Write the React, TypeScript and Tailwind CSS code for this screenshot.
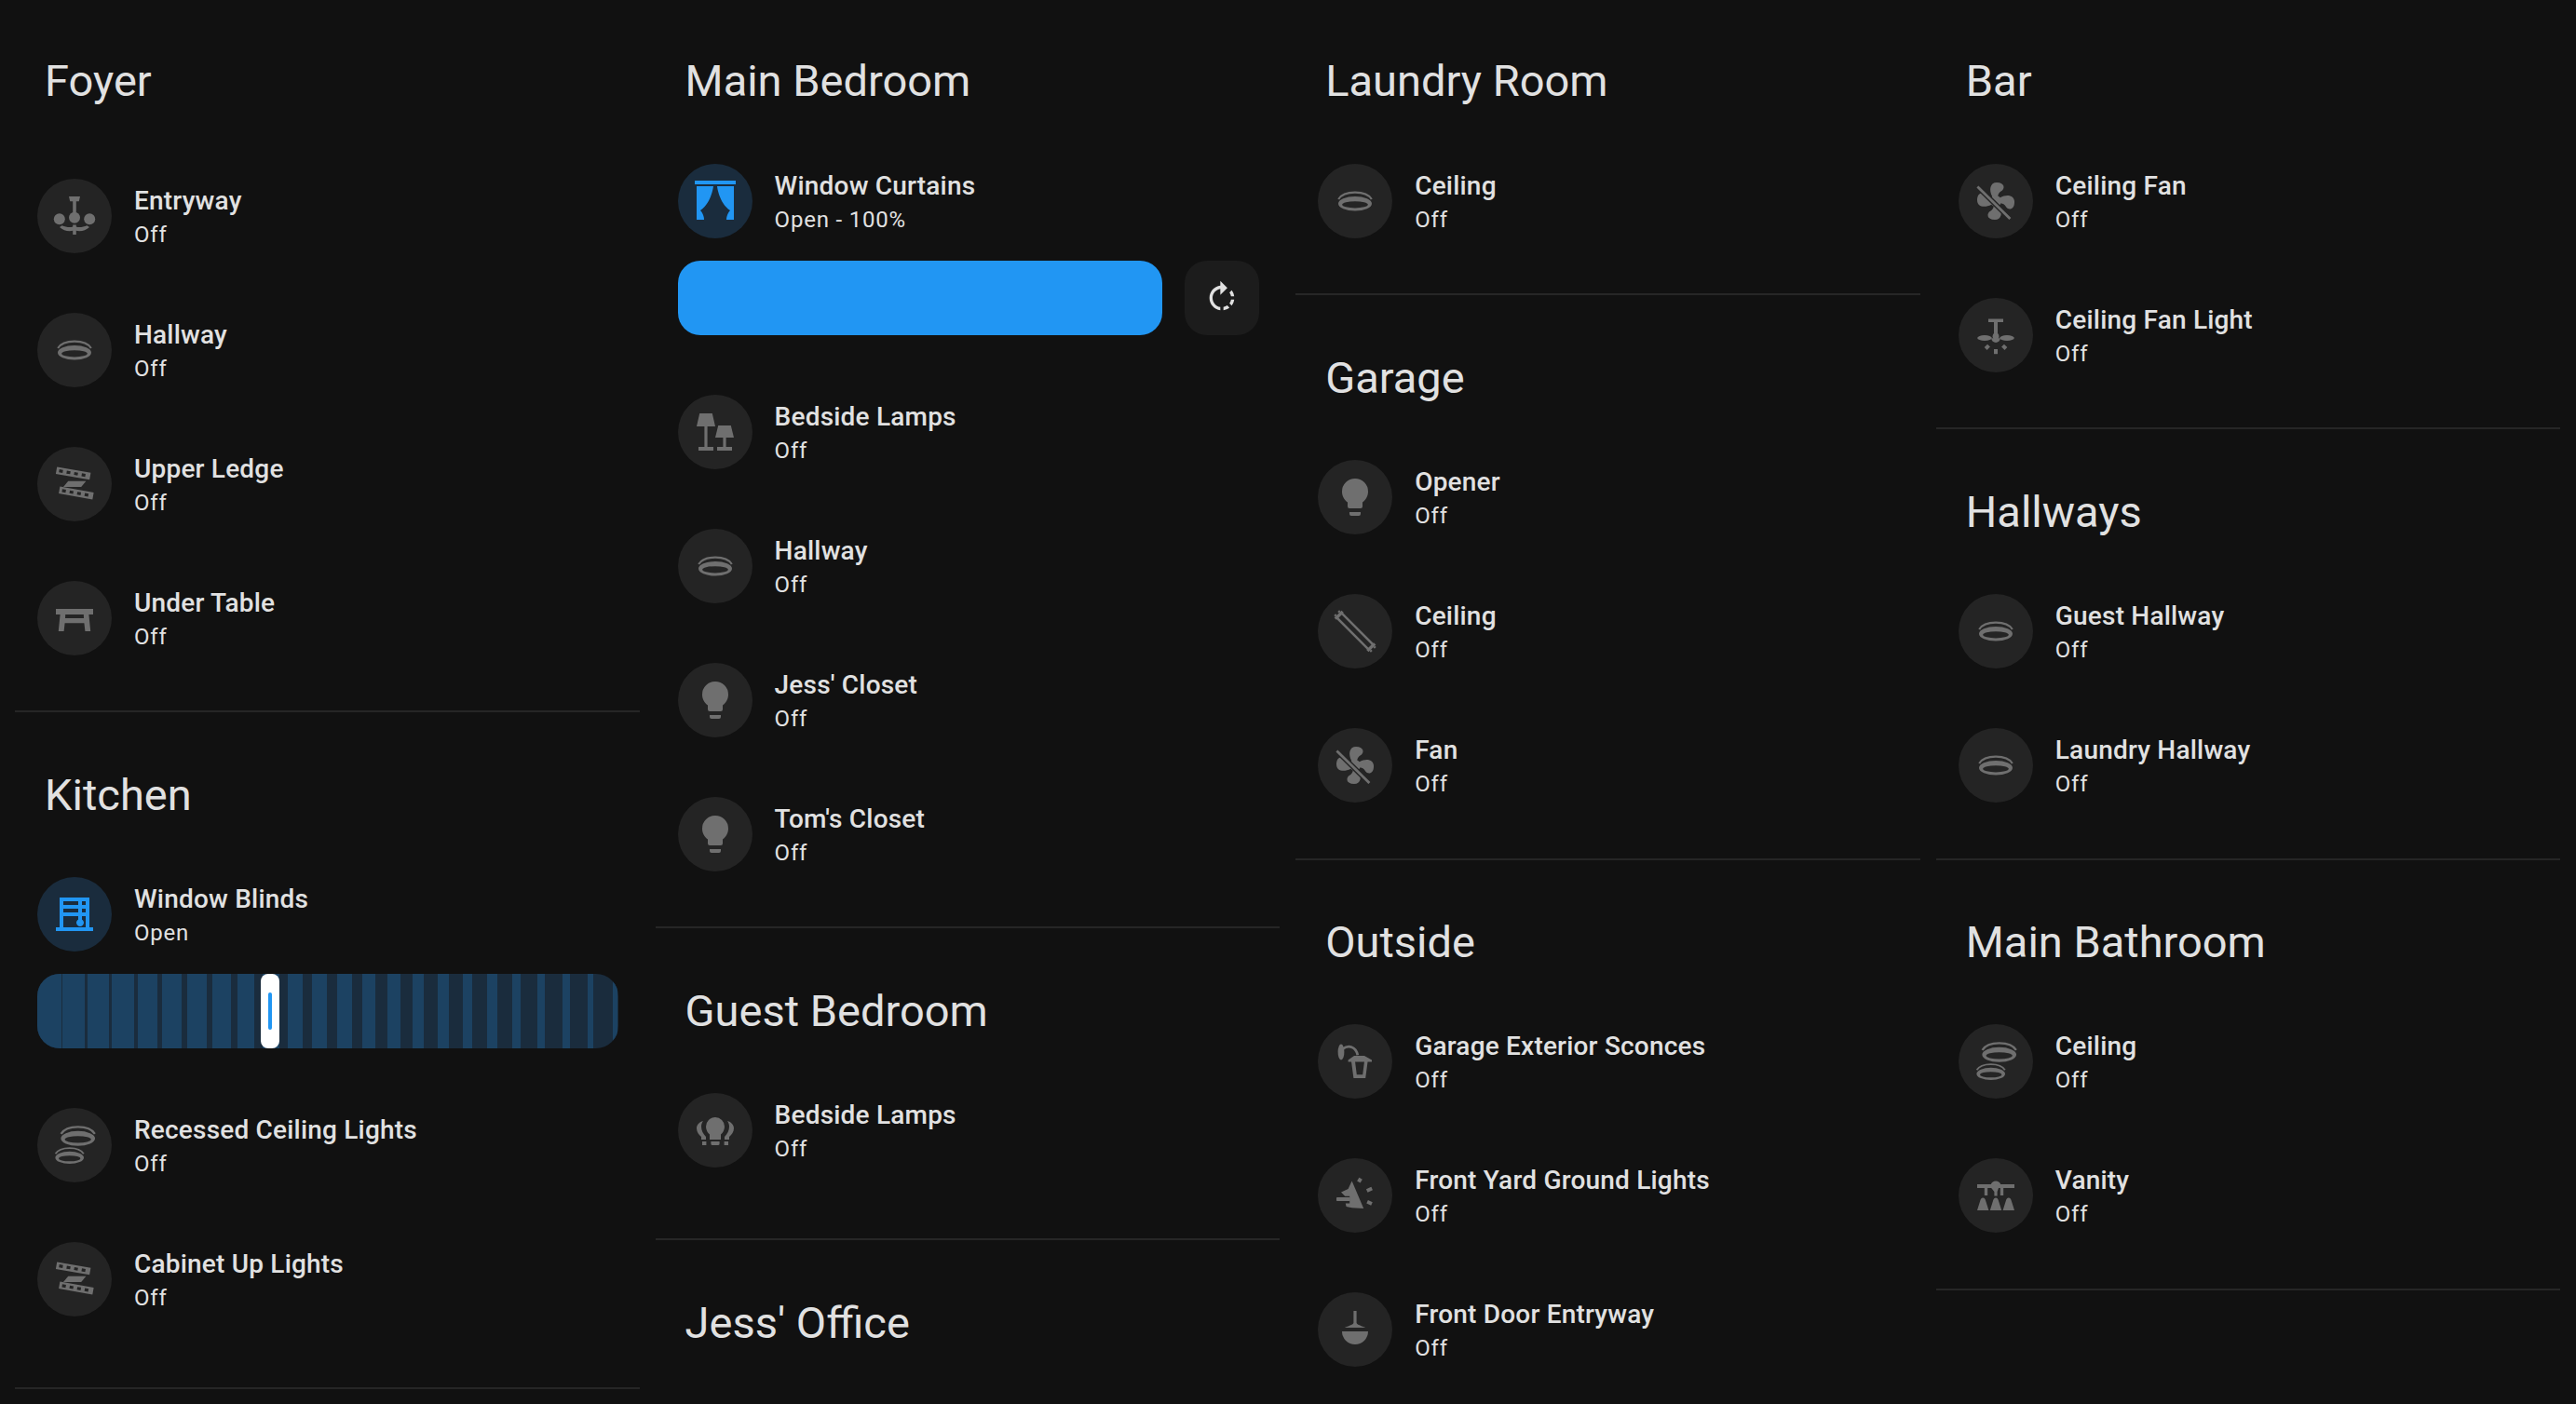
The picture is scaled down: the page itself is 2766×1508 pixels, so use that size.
const FAN = "M12.5,2C17,2 17.11,5.57 14.75,6.75C13.76,7.24 13.32,8.29 13.13,9.22C13.61,9.42 14.03,9.73 14.35,10.13C18.05,8.13 22.03,8.92 22.03,12.5C22.03,17 18.46,17.1 17.28,14.73C16.78,13.74 15.72,13.3 14.79,13.11C14.59,13.59 14.28,14 13.88,14.34C15.87,18.03 15.08,22 11.5,22C7,22 6.91,18.42 9.27,17.24C10.25,16.75 10.69,15.71 10.89,14.79C10.4,14.59 9.97,14.27 9.65,13.87C5.96,15.85 2,15.07 2,11.5C2,7 5.56,6.89 6.74,9.26C7.24,10.25 8.29,10.68 9.22,10.87C9.41,10.39 9.73,9.97 10.14,9.65C8.15,5.96 8.94,2 12.5,2Z";
const BULB = "M12,2A7,7 0 0,0 5,9C5,11.38 6.19,13.47 8,14.74V17A1,1 0 0,0 9,18H15A1,1 0 0,0 16,17V14.74C17.81,13.47 19,11.38 19,9A7,7 0 0,0 12,2M9,21A1,1 0 0,0 10,22H14A1,1 0 0,0 15,21V20H9V21Z";

const Svg = ({ size = 48, children }: { size?: number; children: React.ReactNode }) => (
  <svg width={size} height={size} viewBox="0 0 24 24" fill="currentColor">
    {children}
  </svg>
);

// recessed light: a thick ring with a thin arc above it
const Ring = ({ cx, cy, s = 1 }: { cx: number; cy: number; s?: number }) => (
  <g transform={`translate(${cx} ${cy}) scale(${s})`}>
    <path fillRule="evenodd" d="M-9 0a9 3.9 0 0 1 18 0a9 3.9 0 0 1-18 0zM-6.9 .5a6.9 1.8 0 0 0 13.8 0a6.9 1.8 0 0 0-13.8 0z" />
    <path d="M-8.9 -2.4C-6 -7.3 6 -7.3 8.9 -2.4" fill="none" stroke="currentColor" strokeWidth={1.1} />
  </g>
);

const Recessed = () => <Svg><Ring cx={12} cy={13.4} /></Svg>;
const RecessedDouble = () => (
  <Svg>
    <Ring cx={13.85} cy={8.4} s={1.02} />
    <Ring cx={9.35} cy={18.7} s={0.85} />
  </Svg>
);

const Chandelier = () => (
  <Svg>
    <path d="M9 1.5h6l-.6 2.6h-1.5V10h-1.8V4.1H9.6z" />
    <circle cx={3.9} cy={13.6} r={3} />
    <circle cx={12} cy={12.9} r={3} />
    <circle cx={20.1} cy={13.6} r={3} />
    <path d="M11.1 16.8h1.8v.9c1.6.8 4 0 5.8-.6l1.300.9c-1.900 1.800-4.800 2.500-7.100 1.900V22h-1.800v-2.100c-2.300.6-5.200-.1-7.100-1.900l1.300-.9c1.800.6 4.200 1.400 5.800.6z" />
  </Svg>
);

const StripBand = ({ x, y, angle }: { x: number; y: number; angle: number }) => (
  <g transform={`rotate(${angle} ${x} ${y})`}>
    <path fillRule="evenodd" d={`M${x} ${y}h18.4v3.8H${x}zM${x + 1.5} ${y + 1.1}v1.6h2v-1.6zM${x + 5.6} ${y + 1.1}v1.6h2v-1.6zM${x + 9.7} ${y + 1.1}v1.6h2v-1.6zM${x + 13.8} ${y + 1.1}v1.6h2v-1.6z`} />
  </g>
);

const LedStrip = () => (
  <Svg>
    <StripBand x={2.6} y={2.7} angle={10} />
    <path d="M8.6 10.4h9.6l-2.6 3.1H6z" />
    <StripBand x={4.2} y={13.3} angle={10} />
  </Svg>
);

const Table = () => (
  <Svg><path d="M2 7h20v3h-2.3l.9 9h-2.9l-.5-4.4H6.8L6.3 19H3.4l.9-9H2zM7.1 10l-.1 2h10l-.1-2z" fillRule="evenodd" /></Svg>
);

const Bulb = () => <Svg><path d={BULB} /></Svg>;

const FanOff = () => (
  <Svg>
    <path d={FAN} />
    <path d="M2.2 4.3L19.7 21.5" stroke="#242424" strokeWidth={2.8} fill="none" />
    <path d="M2.2 4.3L19.7 21.5" stroke="currentColor" strokeWidth={1.4} fill="none" />
  </Svg>
);

const Lamps = () => (
  <Svg>
    <path d="M3.6 2h6.8L12 9H2zM6.2 9h1.6v11H11v2H3v-2h3.2zM13.6 8.5h6.8l1.6 6.5H12zM16.2 15h1.6v5H21v2h-8v-2h3.2z" />
  </Svg>
);

const Tube = () => (
  <Svg>
    <g transform="rotate(45 12 12)">
      <rect x={0} y={10.2} width={24} height={3.6} fill="none" stroke="currentColor" strokeWidth={1.3} />
      <rect x={-1} y={9.2} width={1.6} height={5.6} />
      <rect x={23.4} y={9.2} width={1.6} height={5.6} />
      <rect x={-2} y={10} width={1} height={1.2} />
      <rect x={-2} y={12.8} width={1} height={1.2} />
      <rect x={25} y={10} width={1} height={1.2} />
      <rect x={25} y={12.8} width={1} height={1.2} />
    </g>
  </Svg>
);

const Sconce = () => (
  <Svg>
    <ellipse cx={4.5} cy={7} rx={1.7} ry={4.2} />
    <path d="M5.5 5.2C8.5 3 12.4 4 13.4 8.6" fill="none" stroke="currentColor" strokeWidth={1.4} />
    <path d="M11.5 9h5.5l4 2.2v1H8.3v-1z" />
    <path d="M10 12h2l.9 7.1h3.2l.9-7.1h1.8l-1.2 9h-6.4z" />
  </Svg>
);

const GroundLight = () => (
  <Svg>
    <path d="M10.3 4.2L16.6 19l-6.3-.4-3-.6-.4-1.7h2.2V12.4H6.6L4.5 10.3l3.8-1.8z" />
    <rect x={2} y={13} width={7.4} height={2} rx={0.4} />
    <rect x={13.4} y={2.8} width={2.2} height={2} transform="rotate(-60 14.5 3.8)" />
    <rect x={18.2} y={7.9} width={3} height={1.9} transform="rotate(-25 19.7 8.8)" />
    <rect x={18.4} y={15} width={2.7} height={1.9} transform="rotate(25 19.7 16)" />
  </Svg>
);

const Pendant = () => (
  <Svg>
    <path d="M11.2 2h1.6v6.5c.4 1 3 1.7 4.5 2.3v.2H6.7v-.2c1.5-.6 4.1-1.3 4.5-2.3z" />
    <path d="M5 13h14a7 7 0 0 1-14 0z" />
  </Svg>
);

const FanLight = () => (
  <Svg>
    <path d="M8 3.2h8V5h-3v7h-2V5H8z" />
    <ellipse cx={6} cy={13.5} rx={3.9} ry={1.5} />
    <ellipse cx={18} cy={13.5} rx={3.9} ry={1.5} />
    <path d="M9.6 13.6h4.8a2.4 2.4 0 0 1-4.8 0z" />
    <circle cx={12} cy={12.6} r={1.7} />
    <rect x={11} y={19.5} width={2} height={2.6} />
    <rect x={6.4} y={17.2} width={2} height={2.4} transform="rotate(45 7.4 18.4)" />
    <rect x={15.6} y={17.2} width={2} height={2.4} transform="rotate(-45 16.6 18.4)" />
  </Svg>
);

const Vanity = () => (
  <Svg>
    <path d="M2 6h7.4a2.8 2.8 0 0 1 5.2 0H22v2h-5.9v4h-1.7V8h-.9L12.8 10v2.2h-1.6V10L9.6 8H7.6v4H5.900V8H2z" />
    <path d="M5.1 13.2c.8 0 1.3.6 1.6 2L8.2 20H2l1.5-4.8c.3-1.4.8-2 1.6-2z" />
    <path d="M12 13.2c.8 0 1.3.6 1.6 2l1.5 4.8H8.9l1.5-4.8c.3-1.4.8-2 1.6-2z" />
    <path d="M18.9 13.2c.8 0 1.3.6 1.6 2L22 20h-6.2l1.5-4.8c.3-1.4.8-2 1.6-2z" />
  </Svg>
);

const BulbGroup = () => (
  <Svg>
    <path d="M12 5a5 5 0 0 0-5 5c0 1.8.9 3.3 2 4.3V17h6v-2.700c1.100-1 2-2.500 2-4.300a5 5 0 0 0-5-5z" />
    <path d="M9.7 18h4.6v1.2a.8.8 0 0 1-.8.8h-3a.8.8 0 0 1-.8-.8z" />
    <path d="M5.5 7C3.5 7.5 2 9 2 11c0 2 1.3 3.5 2.5 4.5V17h2.5v-1.5C5.5 14 4.500 12 4.500 10c0-1.200.4-2.200 1-3z" />
    <path d="M18.5 7c2 .5 3.500 2 3.500 4 0 2-1.300 3.500-2.500 4.500V17H17v-1.500c1.500-1.500 2.500-3.500 2.500-5.500 0-1.200-.4-2.200-1-3z" />
    <rect x={5} y={18} width={2.2} height={2} />
    <rect x={16.8} y={18} width={2.2} height={2} />
  </Svg>
);

const Curtains = () => (
  <Svg><path d="M23 3H1V1H23V3M2 22H6C6 19 4 17 4 17C10 13 11 4 11 4H2V22M22 4V22H18C18 19 20 17 20 17C14 13 13 4 13 4H22Z" /></Svg>
);

const BlindsOpen = () => (
  <Svg><path d="M20 19V3H4V19H2V21H22V19H20M16 9H18V11H16V9M14 11H6V9H14V11M18 7H16V5H18V7M14 5V7H6V5H14M6 19V13H14V14.82C13.4 15.16 13 15.79 13 16.5C13 17.61 13.9 18.5 15 18.5S17 17.61 17 16.5C17 15.79 16.6 15.16 16 14.82V13H18V19H6Z" /></Svg>
);

const RotateRight = () => (
  <Svg size={40}><path d="M16.89,15.5L18.31,16.89C19.21,15.73 19.76,14.39 19.93,13H17.91C17.77,13.87 17.43,14.72 16.89,15.5M13,17.9V19.92C14.39,19.75 15.74,19.21 16.9,18.31L15.46,16.87C14.71,17.41 13.87,17.76 13,17.9M19.93,11C19.76,9.61 19.21,8.27 18.31,7.11L16.89,8.53C17.43,9.28 17.77,10.13 17.91,11M15.55,5.55L11,1V4.07C7.06,4.56 4,7.92 4,12C4,16.08 7.05,19.44 11,19.93V17.91C8.16,17.43 6,14.97 6,12C6,9.03 8.16,6.57 11,6.09V10L15.55,5.55Z" /></Svg>
);

// light slats of the blinds track: [left, width]
const SLATS: [number, number][] = [
  [0, 25.5], [27.3, 24.1], [54.5, 22.8], [80.4, 23.2], [107.6, 21.9], [134.4, 20.5], [161.2, 20.5], [188.4, 19.2],
  [215.2, 18.3], [242, 18.3], [269.2, 16.1], [295.6, 16], [322.4, 15.6], [349.6, 13.8], [376.4, 13.4], [403.1, 12.1],
  [430.4, 11.6], [457.6, 9.8], [483.5, 10.3], [510.3, 9], [537.6, 8], [564.3, 7.6], [591.6, 5.8], [618.4, 4.6],
];

const BlindsSlider = () => (
  <div className="relative h-20 overflow-hidden rounded-[24px] bg-[#1a2c3d]">
    <div className="flex h-full">
      {SLATS.map(([left, width], i) => (
        <div
          key={left}
          className="h-full shrink-0 bg-[#1c4262]"
          style={{ width, marginLeft: i === 0 ? 0 : left - SLATS[i - 1][0] - SLATS[i - 1][1] }}
        />
      ))}
    </div>
    <div className="absolute inset-y-0 left-[240px] flex w-5 items-center justify-center rounded-[8px] bg-white">
      <div className="h-10 w-1 rounded-full bg-[#2196f3]" />
    </div>
  </div>
);

const CurtainSlider = () => (
  <div className="flex gap-6">
    <div className="h-20 flex-1 rounded-[24px] bg-[#2196f3]" />
    <div className="flex h-20 w-20 items-center justify-center rounded-[24px] bg-[#1c1c1c] text-[#e1e1e1]">
      <RotateRight />
    </div>
  </div>
);

type Device = { name: string; state?: string; Icon: () => React.ReactNode; active?: boolean; control?: React.ReactNode };

const Row = ({ name, state = 'Off', Icon, active, control }: Device) => (
  <div className="py-8 pl-6 pr-[22.5px]">
    <div className="flex h-20 items-center gap-6">
      <div
        className={
          active
            ? 'flex h-20 w-20 shrink-0 items-center justify-center rounded-full bg-[#1a2c3d] text-[#2196f3]'
            : 'flex h-20 w-20 shrink-0 items-center justify-center rounded-full bg-[#242424] text-[#6f6f6f]'
        }
      >
        <Icon />
      </div>
      <div className="flex flex-col text-[#e1e1e1]">
        <span className="text-[28px] font-medium leading-[40px] tracking-[0.2px]">{name}</span>
        <span className="text-[24px] leading-[32px] tracking-[0.8px]">{state}</span>
      </div>
    </div>
    {control && <div className="mt-6">{control}</div>}
  </div>
);

type SectionProps = { title: string; first?: boolean; extraTop?: boolean; tall?: boolean; tight?: boolean; noDivider?: boolean; devices?: Device[] };

const Section = ({ title, first, extraTop, tall, tight, noDivider, devices = [] }: SectionProps) => {
  const edge = noDivider ? '' : tall ? 'border-b-2 border-[#262626] pb-[44px]' : first ? 'border-b-2 border-[#262626] pb-[27px]' : 'border-b-2 border-[#262626] pb-7';
  const headPad = first ? 'pt-[57px]' : tight ? 'pt-[58px]' : 'pt-[59px]';
  const listTop = extraTop ? 'mt-[42.5px]' : first ? 'mt-[26.5px]' : 'mt-[26px]';
  return (
    <section className={edge}>
      <h2 className={`box-content h-[60px] pl-8 text-[47px] leading-[60px] text-[#e1e1e1] ${headPad}`}>{title}</h2>
      <div className={listTop}>
        {devices.map((d) => (
          <Row key={d.name + title} {...d} />
        ))}
      </div>
    </section>
  );
};

export default function App() {
  return (
    <div className="grid h-[1508px] w-[2766px] grid-cols-[repeat(4,670.5px)] items-start gap-x-[17.1px] overflow-hidden bg-[#111111] pl-4 font-['Roboto',sans-serif]">
      <div>
        <Section
          first
          extraTop
          title="Foyer"
          devices={[
            { name: 'Entryway', Icon: Chandelier },
            { name: 'Hallway', Icon: Recessed },
            { name: 'Upper Ledge', Icon: LedStrip },
            { name: 'Under Table', Icon: Table },
          ]}
        />
        <Section
          tall
          title="Kitchen"
          devices={[
            { name: 'Window Blinds', state: 'Open', Icon: BlindsOpen, active: true, control: <BlindsSlider /> },
            { name: 'Recessed Ceiling Lights', Icon: RecessedDouble },
            { name: 'Cabinet Up Lights', Icon: LedStrip },
          ]}
        />
      </div>
      <div>
        <Section
          first
          title="Main Bedroom"
          devices={[
            { name: 'Window Curtains', state: 'Open - 100%', Icon: Curtains, active: true, control: <CurtainSlider /> },
            { name: 'Bedside Lamps', Icon: Lamps },
            { name: 'Hallway', Icon: Recessed },
            { name: "Jess' Closet", Icon: Bulb },
            { name: "Tom's Closet", Icon: Bulb },
          ]}
        />
        <Section tall title="Guest Bedroom" devices={[{ name: 'Bedside Lamps', Icon: BulbGroup }]} />
        <Section noDivider title="Jess' Office" />
      </div>
      <div>
        <Section first title="Laundry Room" devices={[{ name: 'Ceiling', Icon: Recessed }]} />
        <Section
          title="Garage"
          devices={[
            { name: 'Opener', Icon: Bulb },
            { name: 'Ceiling', Icon: Tube },
            { name: 'Fan', Icon: FanOff },
          ]}
        />
        <Section
          noDivider
          tight
          title="Outside"
          devices={[
            { name: 'Garage Exterior Sconces', Icon: Sconce },
            { name: 'Front Yard Ground Lights', Icon: GroundLight },
            { name: 'Front Door Entryway', Icon: Pendant },
          ]}
        />
      </div>
      <div>
        <Section
          first
          title="Bar"
          devices={[
            { name: 'Ceiling Fan', Icon: FanOff },
            { name: 'Ceiling Fan Light', Icon: FanLight },
          ]}
        />
        <Section
          title="Hallways"
          devices={[
            { name: 'Guest Hallway', Icon: Recessed },
            { name: 'Laundry Hallway', Icon: Recessed },
          ]}
        />
        <Section
          tight
          title="Main Bathroom"
          devices={[
            { name: 'Ceiling', Icon: RecessedDouble },
            { name: 'Vanity', Icon: Vanity },
          ]}
        />
      </div>
    </div>
  );
}
